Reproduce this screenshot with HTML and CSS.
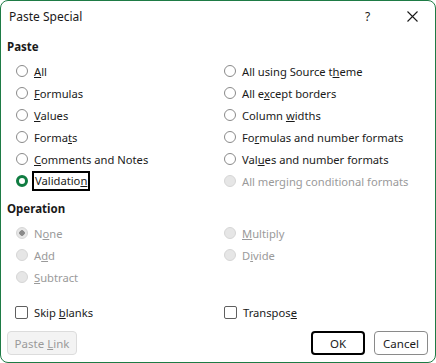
FILE: index.html
```html
<!DOCTYPE html>
<html>
<head>
<meta charset="utf-8">
<link rel="stylesheet" href="styles.css">
</head>
<body>
<div class="window">
  <div class="titlebar">
    <span class="title">Paste Special</span>
    <span class="help">?</span>
    <span class="close"><svg width="11" height="11" viewBox="0 0 11 11"><path d="M0.5 0.5 L10.5 10.5 M10.5 0.5 L0.5 10.5" stroke="#1a1a1a" stroke-width="1.1" fill="none"/></svg></span>
  </div>
  <div class="content">
    <div class="heading">Paste</div>
    <div class="grid">
      <div class="opt"><span class="radio"></span><span><u>A</u>ll</span></div>
      <div class="opt"><span class="radio"></span><span>All using Source t<u>h</u>eme</span></div>
      <div class="opt"><span class="radio"></span><span><u>F</u>ormulas</span></div>
      <div class="opt"><span class="radio"></span><span>All e<u>x</u>cept borders</span></div>
      <div class="opt"><span class="radio"></span><span><u>V</u>alues</span></div>
      <div class="opt"><span class="radio"></span><span>Column <u>w</u>idths</span></div>
      <div class="opt"><span class="radio"></span><span>Forma<u>t</u>s</span></div>
      <div class="opt"><span class="radio"></span><span>Fo<u>r</u>mulas and number formats</span></div>
      <div class="opt"><span class="radio"></span><span><u>C</u>omments and Notes</span></div>
      <div class="opt"><span class="radio"></span><span>Val<u>u</u>es and number formats</span></div>
      <div class="opt"><span class="radio checked"></span><span class="focus">Validatio<u>n</u></span></div>
      <div class="opt disabled"><span class="radio"></span><span>All merging conditional formats</span></div>
    </div>
    <div class="heading op">Operation</div>
    <div class="grid">
      <div class="opt disabled"><span class="radio dot"></span><span>N<u>o</u>ne</span></div>
      <div class="opt disabled"><span class="radio"></span><span><u>M</u>ultiply</span></div>
      <div class="opt disabled"><span class="radio"></span><span>A<u>d</u>d</span></div>
      <div class="opt disabled"><span class="radio"></span><span>D<u>i</u>vide</span></div>
      <div class="opt disabled"><span class="radio"></span><span><u>S</u>ubtract</span></div>
    </div>
    <div class="grid checks">
      <div class="opt"><span class="check"></span><span>Skip <u>b</u>lanks</span></div>
      <div class="opt"><span class="check"></span><span>Transpos<u>e</u></span></div>
    </div>
    <div class="buttons">
      <button class="btn link" disabled>Paste <u>L</u>ink</button>
      <span class="spacer"></span>
      <button class="btn ok">OK</button>
      <button class="btn cancel">Cancel</button>
    </div>
  </div>
</div>
</body>
</html>
```

FILE: styles.css
```css
* { box-sizing: border-box; }
html, body { margin: 0; padding: 0; background: #fff; }
body {
  font-family: "Noto Sans", "Open Sans", sans-serif;
  font-size: 11.2px;
  color: #1a1a1a;
}
.window {
  width: 436px;
  height: 363px;
  border: 1px solid #1e7b45;
  border-radius: 8px;
  background: #fff;
  overflow: hidden;
}
.titlebar {
  height: 30px;
  display: flex;
  align-items: center;
}
.title {
  padding-left: 8px;
  font-size: 12px;
  flex: 1;
}
.help {
  width: 12px;
  margin-right: 30px;
  font-size: 12px;
}
.close {
  display: flex;
  margin-right: 17px;
}
.content {
  padding: 0 7px 0 6px;
}
.heading {
  font-weight: bold;
  height: 16px;
  line-height: 16px;
  margin-top: 8px;
  font-size: 11.5px;
}
.heading.op { margin-top: 9px; }
.grid {
  display: grid;
  grid-template-columns: 208px 1fr;
  padding-left: 9px;
  margin-top: 5px;
}
.opt {
  height: 22px;
  display: flex;
  align-items: center;
  gap: 6px;
  white-space: nowrap;
}
.radio {
  width: 12px;
  height: 12px;
  border-radius: 50%;
  border: 1px solid #8a8a8a;
  background: #fff;
  flex: none;
}
.radio.checked {
  border: 3.5px solid #107c41;
}
.disabled { color: #9a9a9a; }
.disabled .radio {
  border-color: #d6d6d6;
  background: #e6e6e6;
}
.disabled .radio.dot {
  background: radial-gradient(circle, #8a8a8a 0 2.5px, #e6e6e6 3px);
}
.focus {
  outline: 2px solid #000;
  outline-offset: 0;
  padding: 0 1px;
  line-height: 16px;
}
.checks {
  margin-top: 13px;
  padding-left: 8px;
  grid-template-columns: 209px 1fr;
}
.check {
  width: 13px;
  height: 13px;
  border: 1px solid #5f5f5f;
  border-radius: 2px;
  flex: none;
}
.buttons {
  display: flex;
  margin-top: 8px;
  align-items: center;
}
.spacer { flex: 1; }
.btn {
  font-family: inherit;
  font-size: 11.5px;
  height: 24px;
  border-radius: 4px;
  background: #fff;
  color: #1a1a1a;
  padding: 0;
}
.btn.link {
  width: 70px;
  background: #f3f3f3;
  border: 1px solid #dcdcdc;
  color: #9a9a9a;
}
.btn.ok {
  width: 54px;
  border: 2px solid #000;
  margin-right: 9px;
}
.btn.cancel {
  width: 54px;
  border: 1px solid #8a8a8a;
}
```
